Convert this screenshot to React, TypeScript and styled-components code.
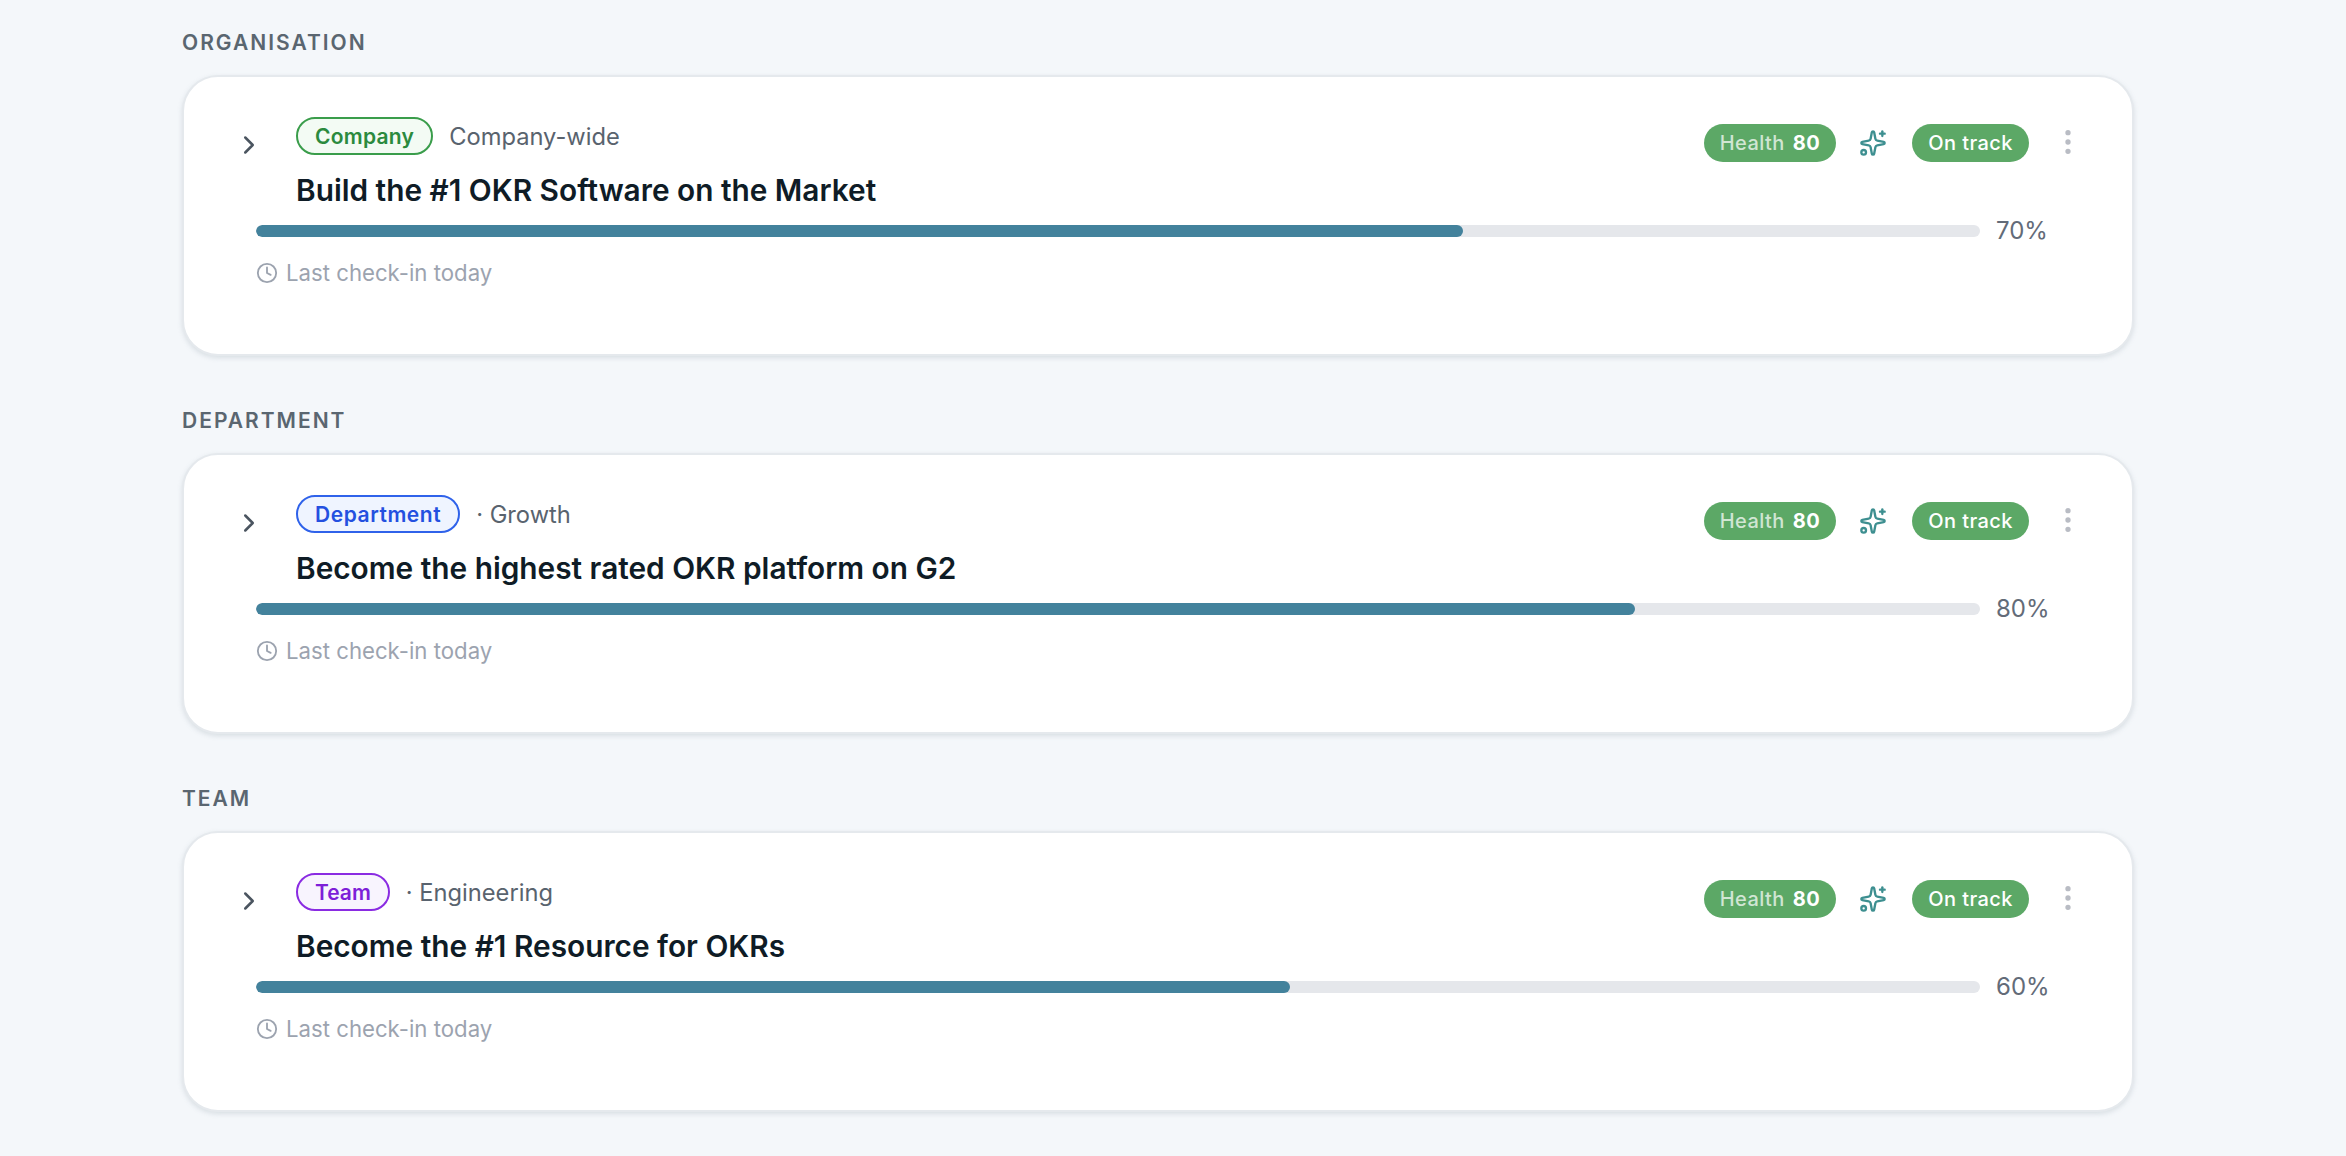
import React from "react";
import styled, { createGlobalStyle } from "styled-components";
import { ChevronRight, Clock, EllipsisVertical, Sparkles } from "lucide-react";

type Tone = "green" | "blue" | "purple";

const tones = {
  green: { border: "#3a9d4b", bg: "#f3fbf4", text: "#2b8a3e", spacing: "0.25px" },
  blue: { border: "#2f62ea", bg: "#eff4ff", text: "#2450e0", spacing: "0.55px" },
  purple: { border: "#8a2be2", bg: "#f8f4fe", text: "#7e1fd8", spacing: "0" },
};

const GlobalStyle = createGlobalStyle`
  html, body {
    margin: 0;
    background: #f4f7fa;
    font-family: Inter, "Liberation Sans", sans-serif;
  }
`;

const Page = styled.main`
  width: 1952px;
  padding: 28px 0 0 182px;
`;

const Section = styled.section`
  margin-bottom: 50.5px;
`;

const SectionLabel = styled.h2`
  margin: 0 0 17.5px;
  height: 29px;
  line-height: 29px;
  font-size: 21px;
  font-weight: 600;
  letter-spacing: 2px;
  color: #5a6670;
`;

const Card = styled.article`
  box-sizing: border-box;
  height: 281px;
  padding: 40.5px 48px 0 72px;
  background: #fff;
  border: 2px solid #e5e9ed;
  border-radius: 36px;
  box-shadow: 0 2px 5px rgba(120, 135, 150, 0.22);
`;

const Header = styled.div`
  display: flex;
  align-items: flex-start;
`;

const Toggle = styled.div`
  width: 40px;
  height: 38px;
  flex: none;
  display: flex;
  align-items: center;
  color: #4b5560;
  padding-top: 9px;
  margin-left: -30px;
  & svg {
    margin-left: 8px;
  }
`;

const Main = styled.div`
  margin-left: 30px;
  flex: 1;
  min-width: 0;
`;

const Meta = styled.div`
  display: flex;
  align-items: center;
  gap: 16px;
  height: 38px;
`;

const Badge = styled.span<{ $tone: Tone }>`
  box-sizing: border-box;
  height: 38px;
  padding: 0 17px;
  display: inline-flex;
  align-items: center;
  border-radius: 19px;
  border: 2px solid ${({ $tone }) => tones[$tone].border};
  background: ${({ $tone }) => tones[$tone].bg};
  color: ${({ $tone }) => tones[$tone].text};
  font-size: 21px;
  font-weight: 600;
  letter-spacing: ${({ $tone }) => tones[$tone].spacing};
`;

const Scope = styled.span`
  font-size: 23.7px;
  color: #59636e;
`;

const Title = styled.h3`
  margin: 13px 0 0;
  height: 48.5px;
  line-height: 45px;
  font-size: 29.8px;
  font-weight: 600;
  color: #0f1c26;
`;

const Actions = styled.div`
  display: flex;
  align-items: center;
  flex: none;
  height: 38px;
  margin-top: 7px;
`;

const Pill = styled.span`
  box-sizing: border-box;
  height: 38px;
  padding: 0 16px;
  display: inline-flex;
  align-items: center;
  gap: 8px;
  border-radius: 19px;
  background: #5ca866;
  color: #fff;
  font-size: 20px;
  font-weight: 500;
  letter-spacing: 0.45px;
`;

const HealthLabel = styled.span`
  color: rgba(255, 255, 255, 0.72);
`;

const HealthValue = styled.span`
  font-weight: 700;
`;

const Spark = styled(Sparkles)`
  margin: 0 25px 0 23px;
  color: #3d8f90;
`;

const Dots = styled(EllipsisVertical)`
  margin: -3px 0 0 23px;
  color: #b9bcc4;
  fill: #b9bcc4;
`;

const ProgressRow = styled.div`
  display: flex;
  align-items: center;
  gap: 16px;
  height: 28px;
`;

const Track = styled.div`
  flex: none;
  width: 1724px;
  height: 12px;
  border-radius: 6px;
  background: #e5e7eb;
  overflow: hidden;
`;

const Fill = styled.div`
  height: 100%;
  border-radius: 6px;
  background: #43829c;
`;

const Percent = styled.span`
  font-size: 24px;
  color: #636b78;
`;

const CheckIn = styled.div`
  display: flex;
  align-items: center;
  gap: 8px;
  margin-top: 14.5px;
  font-size: 22.2px;
  color: #9ca3af;
`;

type Objective = {
  section: string;
  tag: string;
  tone: Tone;
  scope: string;
  title: string;
  progress: number;
};

const objectives: Objective[] = [
  {
    section: "ORGANISATION",
    tag: "Company",
    tone: "green",
    scope: "Company-wide",
    title: "Build the #1 OKR Software on the Market",
    progress: 70,
  },
  {
    section: "DEPARTMENT",
    tag: "Department",
    tone: "blue",
    scope: "· Growth",
    title: "Become the highest rated OKR platform on G2",
    progress: 80,
  },
  {
    section: "TEAM",
    tag: "Team",
    tone: "purple",
    scope: "· Engineering",
    title: "Become the #1 Resource for OKRs",
    progress: 60,
  },
];

const App = () => (
  <Page>
    <GlobalStyle />
    {objectives.map((o) => (
      <Section key={o.section}>
        <SectionLabel>{o.section}</SectionLabel>
        <Card>
          <Header>
            <Toggle>
              <ChevronRight size={30} strokeWidth={2} />
            </Toggle>
            <Main>
              <Meta>
                <Badge $tone={o.tone}>{o.tag}</Badge>
                <Scope>{o.scope}</Scope>
              </Meta>
              <Title>{o.title}</Title>
            </Main>
            <Actions>
              <Pill>
                <HealthLabel>Health</HealthLabel>
                <HealthValue>80</HealthValue>
              </Pill>
              <Spark size={28} strokeWidth={2} />
              <Pill>On track</Pill>
              <Dots size={32} strokeWidth={2} />
            </Actions>
          </Header>
          <ProgressRow>
            <Track>
              <Fill style={{ width: `${o.progress}%` }} />
            </Track>
            <Percent>{o.progress}%</Percent>
          </ProgressRow>
          <CheckIn>
            <Clock size={22} strokeWidth={2} />
            Last check-in today
          </CheckIn>
        </Card>
      </Section>
    ))}
  </Page>
);

export default App;
